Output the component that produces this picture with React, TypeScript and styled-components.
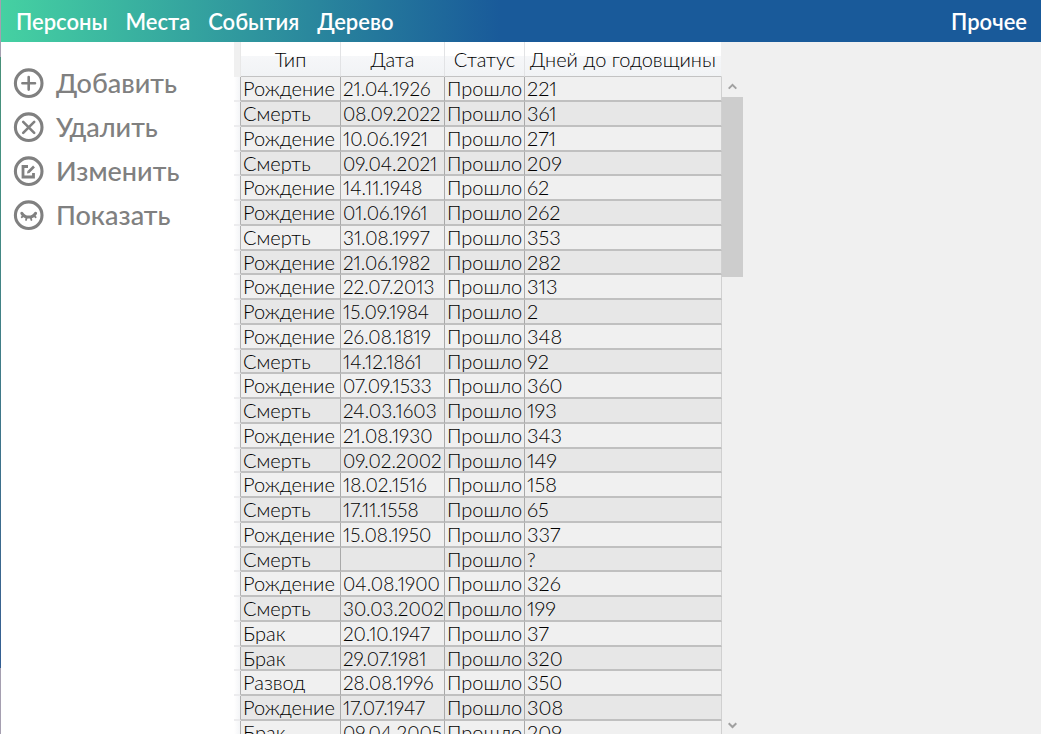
import React from 'react';
import styled, { createGlobalStyle } from 'styled-components';

const GlobalStyle = createGlobalStyle`
  * { box-sizing: border-box; }
  html, body, #root { height: 100%; }
  body {
    margin: 0;
    overflow: hidden;
    background: #f0f0f0;
    font-family: Lato, "Open Sans", sans-serif;
  }
`;

const Window = styled.div`
  display: flex;
  flex-direction: column;
  height: 100%;
  background: linear-gradient(#a59fb0 57px, #479078 57px, #459181 160px, #3a6490 600px, #335f93 668px, #a59fb0 668px) left / 1px 100% no-repeat;
  padding-left: 1px;
`;

const TopBar = styled.header`
  display: flex;
  flex: none;
  align-items: center;
  justify-content: space-between;
  height: 42px;
  padding: 2px 14px 0 15px;
  background: linear-gradient(90deg, #45d1a2 0, #195a9a 500px);
`;

const Menu = styled.nav`
  display: flex;
  gap: 18px;
`;

const MenuButton = styled.button`
  padding: 0;
  border: 0;
  background: none;
  color: #fff;
  font: 600 22px/28px Lato, "Open Sans", sans-serif;
`;

const Body = styled.div`
  display: flex;
  flex: 1;
  min-height: 0;
`;

const Sidebar = styled.aside`
  display: flex;
  flex-direction: column;
  flex: none;
  width: 233px;
  padding: 19px 12px;
  background: #fff;
`;

const Action = styled.button`
  display: flex;
  align-items: center;
  gap: 12px;
  height: 44px;
  padding: 0;
  border: 0;
  background: none;
  color: #808080;
  font: 500 27px/32px Lato, "Open Sans", sans-serif;

  svg { flex: none; }
`;

const Grid = styled.main`
  display: flex;
  flex: none;
  overflow: hidden;
`;

const Table = styled.table`
  align-self: flex-start;
  table-layout: fixed;
  width: 488px;
  border-collapse: separate;
  border-spacing: 0;
  color: #000;
  font-size: 20px;
  font-weight: 300;
  font-variant-numeric: proportional-nums;
  line-height: 22px;
`;

const HeadCell = styled.th`
  height: 35px;
  padding: 0;
  border-right: 1px solid #e2e3e5;
  border-bottom: 1px solid #c3c3c3;
  background: linear-gradient(#fff 40%, #f6f7f9 42%, #f1f3f5);
  font-weight: 300;
  text-align: center;
  white-space: nowrap;

  &:last-child { border-right-color: #f0f0f0; }
`;

const HeadCorner = styled.td`
  border-right: 1px solid #e8e8e8;
  background: #f0f0f0;
`;

const Row = styled.tr`
  height: 25px;
  background: #f0f0f0;

  &:nth-child(even) { background: #e7e7e7; }
  &:nth-child(4n) { height: 24px; }
`;

const Cell = styled.td<{ $numeric?: boolean }>`
  padding: 1px 0 0 2px;
  border-right: 1px solid #a9a9a9;
  border-bottom: 2px solid #c0c0c0;
  font-size: ${(p) => (p.$numeric ? 19 : 20)}px;
  line-height: 21px;
  vertical-align: top;
  white-space: nowrap;

  &:last-child { border-right-color: #d0d0d0; }
`;

const RowHandle = styled.td`
  padding: 0;
  border-right: 1px solid #b0b0b0;
  border-bottom: 2px solid #ececee;
  background: linear-gradient(90deg, #fff, #f4f5f7);
`;

const Scrollbar = styled.div`
  display: flex;
  flex-direction: column;
  width: 21px;
  padding-top: 34px;
`;

const ScrollButton = styled.button<{ $height: number }>`
  display: grid;
  place-items: center;
  flex: none;
  height: ${(p) => p.$height}px;
  padding: 0;
  border: 0;
  background: #f0f0f0;
`;

const Track = styled.div`
  flex: 1;
`;

const Thumb = styled.div`
  height: 180px;
  background: #cdcdcd;
`;

type IconName = 'add' | 'remove' | 'edit' | 'show';

const glyphs: Record<IconName, React.ReactNode> = {
  add: <path d="M15.7 9v12.6M9.4 15.3h12.6" />,
  remove: <path d="M10.2 9.8l11 11M21.2 9.8l-11 11" />,
  edit: (
    <>
      <path d="M15 10.5H10v10.5h10.5V17" strokeLinecap="butt" strokeWidth="2.8" />
      <path d="M15.5 16l5.5-5.5" strokeLinecap="butt" strokeWidth="2.6" />
      <path d="M14 17.5l.6-2.8 2.2 2.2z" fill="#808080" stroke="none" />
    </>
  ),
  show: (
    <>
      <path d="M8.8 13.2c2.8 5.2 11 5.2 13.8 0" strokeWidth="3" />
      <path d="M10.6 15.6l-1.9 1.6M13.7 17.4l-.7 2.6M17.7 17.4l.7 2.6M20.8 15.6l1.9 1.6" strokeWidth="1.8" />
    </>
  ),
};

const Icon = ({ name }: { name: IconName }) => (
  <svg width="31" height="31" viewBox="0 0 31 31" fill="none" stroke="#808080" strokeWidth="2.6" strokeLinecap="round" aria-hidden="true">
    <circle cx="15.7" cy="15.2" r="13.3" strokeWidth="3.1" />
    {glyphs[name]}
  </svg>
);

const Chevron = ({ down }: { down?: boolean }) => (
  <svg width="9" height="7" viewBox="0 0 9 7" fill="none" stroke="#a0a0a0" strokeWidth="2" aria-hidden="true">
    <path d={down ? 'M.7 1.2l3.8 3.8 3.8-3.8' : 'M.7 5.6l3.8-3.8 3.8 3.8'} />
  </svg>
);

const actions: [IconName, string][] = [
  ['add', 'Добавить'],
  ['remove', 'Удалить'],
  ['edit', 'Изменить'],
  ['show', 'Показать'],
];

const events: [string, string, string][] = [
  ['Рождение', '21.04.1926', '221'],
  ['Смерть', '08.09.2022', '361'],
  ['Рождение', '10.06.1921', '271'],
  ['Смерть', '09.04.2021', '209'],
  ['Рождение', '14.11.1948', '62'],
  ['Рождение', '01.06.1961', '262'],
  ['Смерть', '31.08.1997', '353'],
  ['Рождение', '21.06.1982', '282'],
  ['Рождение', '22.07.2013', '313'],
  ['Рождение', '15.09.1984', '2'],
  ['Рождение', '26.08.1819', '348'],
  ['Смерть', '14.12.1861', '92'],
  ['Рождение', '07.09.1533', '360'],
  ['Смерть', '24.03.1603', '193'],
  ['Рождение', '21.08.1930', '343'],
  ['Смерть', '09.02.2002', '149'],
  ['Рождение', '18.02.1516', '158'],
  ['Смерть', '17.11.1558', '65'],
  ['Рождение', '15.08.1950', '337'],
  ['Смерть', '', '?'],
  ['Рождение', '04.08.1900', '326'],
  ['Смерть', '30.03.2002', '199'],
  ['Брак', '20.10.1947', '37'],
  ['Брак', '29.07.1981', '320'],
  ['Развод', '28.08.1996', '350'],
  ['Рождение', '17.07.1947', '308'],
  ['Брак', '09.04.2005', '209'],
];

export default function App() {
  return (
    <Window>
      <GlobalStyle />
      <TopBar>
        <Menu>
          {['Персоны', 'Места', 'События', 'Дерево'].map((label) => (
            <MenuButton key={label}>{label}</MenuButton>
          ))}
        </Menu>
        <MenuButton>Прочее</MenuButton>
      </TopBar>
      <Body>
        <Sidebar>
          {actions.map(([icon, label]) => (
            <Action key={label}>
              <Icon name={icon} />
              {label}
            </Action>
          ))}
        </Sidebar>
        <Grid>
          <Table>
            <colgroup>
              <col style={{ width: 7 }} />
              <col style={{ width: 100 }} />
              <col style={{ width: 104 }} />
              <col style={{ width: 80 }} />
              <col style={{ width: 197 }} />
            </colgroup>
            <thead>
              <tr>
                <HeadCorner />
                <HeadCell scope="col">Тип</HeadCell>
                <HeadCell scope="col">Дата</HeadCell>
                <HeadCell scope="col">Статус</HeadCell>
                <HeadCell scope="col">Дней до годовщины</HeadCell>
              </tr>
            </thead>
            <tbody>
              {events.map(([type, date, days], index) => (
                <Row key={index}>
                  <RowHandle />
                  <Cell>{type}</Cell>
                  <Cell $numeric>{date}</Cell>
                  <Cell>Прошло</Cell>
                  <Cell>{days}</Cell>
                </Row>
              ))}
            </tbody>
          </Table>
          <Scrollbar>
            <ScrollButton $height={21} aria-label="Вверх"><Chevron /></ScrollButton>
            <Track><Thumb /></Track>
            <ScrollButton $height={17} aria-label="Вниз"><Chevron down /></ScrollButton>
          </Scrollbar>
        </Grid>
      </Body>
    </Window>
  );
}
